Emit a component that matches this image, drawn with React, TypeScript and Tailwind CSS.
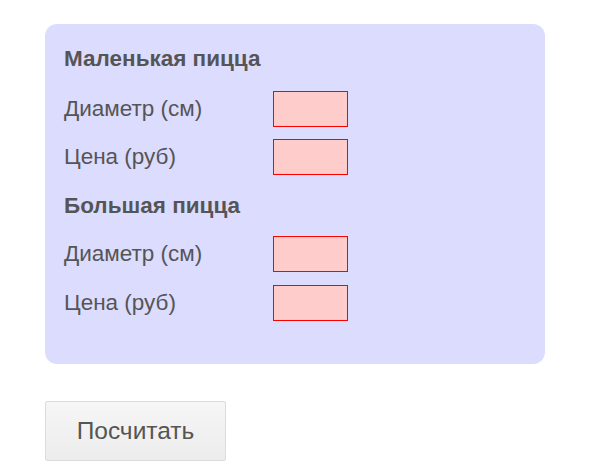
import React from 'react'

const font = { fontFamily: '"Liberation Sans", Arial, sans-serif' }

function Row({ label, className }: { label: string; className: string }) {
  return (
    <div className={`flex items-center ${className}`}>
      <label className="w-[209px] text-[22.5px] leading-[26px] text-[#555]">{label}</label>
      <input type="text" className="w-[75px] h-[36px] bg-[#ffcccc] border border-[#ff0000] outline-none" />
    </div>
  )
}

export default function App() {
  return (
    <div className="pl-[45px] pt-[24px] bg-white min-h-[468px]" style={font}>
      <div className="w-[500px] h-[340px] bg-[#dcdcff] rounded-[12px] px-[19px] pt-[22px]">
        <h3 className="text-[22.5px] leading-[26px] font-bold text-[#555]">Маленькая пицца</h3>
        <Row label="Диаметр (см)" className="mt-[19px]" />
        <Row label="Цена (руб)" className="mt-[12px]" />
        <h3 className="mt-[18px] text-[22.5px] leading-[26px] font-bold text-[#555]">Большая пицца</h3>
        <Row label="Диаметр (см)" className="mt-[17px]" />
        <Row label="Цена (руб)" className="mt-[13px]" />
      </div>
      <button className="mt-[37px] w-[181px] h-[60px] rounded-[2px] border border-[#dcdcdc] bg-gradient-to-b from-[#f6f6f6] to-[#ececec] text-[24.5px] text-[#555]">
        Посчитать
      </button>
    </div>
  )
}
